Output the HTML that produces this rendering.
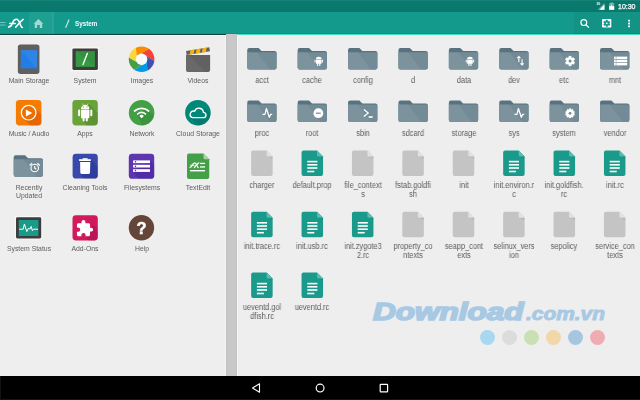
<!DOCTYPE html><html><head><meta charset="utf-8"><style>
*{margin:0;padding:0;box-sizing:border-box}
html,body{width:640px;height:400px;overflow:hidden;background:#eeeeee;font-family:"Liberation Sans",sans-serif}
body{position:relative}
.a{position:absolute}
.l{position:absolute;text-align:center;white-space:nowrap;color:#5c5c5c;font-size:6.85px;line-height:8px;width:56px}
.r{position:absolute;text-align:center;white-space:nowrap;color:#5c5c5c;font-size:8.5px;line-height:9px;width:50px;transform:scaleX(0.87);transform-origin:50% 0}
svg{position:absolute;left:0;top:0}
.l,.r{will-change:transform}
</style></head><body>

<div class="a" style="left:0;top:0;width:640px;height:12px;background:#08796c"></div>
<div class="a" style="left:0;top:0;width:640px;height:1px;background:#158378"></div>
<div class="a" style="left:0;top:12px;width:640px;height:22px;background:#149a8d"></div>
<div class="a" style="left:29px;top:12px;width:23px;height:22px;background:rgba(255,255,255,0.05)"></div>
<div class="a" style="left:52px;top:12px;width:2px;height:22px;background:rgba(255,255,255,0.09)"></div>
<div class="a" style="left:574px;top:12px;width:66px;height:22px;background:rgba(0,0,0,0.045)"></div>
<div class="a" style="left:0;top:34px;width:226px;height:1px;background:#0d4740"></div>
<div class="a" style="left:0;top:35px;width:226px;height:1px;background:#fafafa"></div>
<div class="a" style="left:0;top:33px;width:640px;height:1px;background:rgba(0,0,0,0.06)"></div>
<div class="a" style="left:237px;top:34px;width:403px;height:1px;background:#3fe3bd"></div>
<div class="a" style="left:237px;top:35px;width:403px;height:1px;background:#f8f0f1"></div>
<div class="a" style="left:225px;top:36px;width:1px;height:340px;background:#f6f6f6"></div>
<div class="a" style="left:226px;top:34px;width:11px;height:342px;background:#c8c8c8;border-left:1px solid #bfbfbf;border-right:1px solid #c2c2c2"></div>
<div class="a" style="left:237px;top:35px;width:1px;height:341px;background:#f6f6f6"></div>
<div class="a" style="left:0;top:376px;width:640px;height:24px;background:#000"></div>
<div class="a" style="left:0;top:399px;width:640px;height:1px;background:#141414"></div>
<div class="a" style="left:0;top:376px;width:1px;height:24px;background:#121212"></div>
<div class="a" style="left:74.8px;top:18.9px;font-size:6.3px;line-height:10px;font-weight:bold;color:#f4fbfa;will-change:transform">System</div>
<div class="a" style="left:618px;top:2.3px;font-size:7px;line-height:10px;font-weight:normal;color:#fff;will-change:transform;-webkit-text-stroke:0.25px #fff">10:30</div>
<div class="l" style="left:0.70px;top:76.98px">Main Storage</div>
<div class="l" style="left:57.20px;top:76.98px">System</div>
<div class="l" style="left:113.60px;top:76.98px">Images</div>
<div class="l" style="left:170.00px;top:76.98px">Videos</div>
<div class="l" style="left:0.70px;top:129.87px">Music / Audio</div>
<div class="l" style="left:57.20px;top:129.87px">Apps</div>
<div class="l" style="left:113.60px;top:129.87px">Network</div>
<div class="l" style="left:170.00px;top:129.87px">Cloud Storage</div>
<div class="l" style="left:0.70px;top:184.27px">Recently<br>Updated</div>
<div class="l" style="left:57.20px;top:184.02px">Cleaning Tools</div>
<div class="l" style="left:113.60px;top:184.02px">Filesystems</div>
<div class="l" style="left:170.00px;top:184.02px">TextEdit</div>
<div class="l" style="left:0.70px;top:244.87px">System Status</div>
<div class="l" style="left:57.20px;top:244.87px">Add-Ons</div>
<div class="l" style="left:113.60px;top:244.87px">Help</div>
<div class="r" style="left:236.90px;top:75.55px">acct</div>
<div class="r" style="left:287.30px;top:75.55px">cache</div>
<div class="r" style="left:337.70px;top:75.55px">config</div>
<div class="r" style="left:388.10px;top:75.55px">d</div>
<div class="r" style="left:438.50px;top:75.55px">data</div>
<div class="r" style="left:488.90px;top:75.55px">dev</div>
<div class="r" style="left:539.30px;top:75.55px">etc</div>
<div class="r" style="left:589.70px;top:75.55px">mnt</div>
<div class="r" style="left:236.90px;top:128.55px">proc</div>
<div class="r" style="left:287.30px;top:128.55px">root</div>
<div class="r" style="left:337.70px;top:128.55px">sbin</div>
<div class="r" style="left:388.10px;top:128.55px">sdcard</div>
<div class="r" style="left:438.50px;top:128.55px">storage</div>
<div class="r" style="left:488.90px;top:128.55px">sys</div>
<div class="r" style="left:539.30px;top:128.55px">system</div>
<div class="r" style="left:589.70px;top:128.55px">vendor</div>
<div class="r" style="left:236.90px;top:180.55px">charger</div>
<div class="r" style="left:287.30px;top:180.55px">default.prop</div>
<div class="r" style="left:337.70px;top:180.55px">file_context<br>s</div>
<div class="r" style="left:388.10px;top:180.55px">fstab.goldfi<br>sh</div>
<div class="r" style="left:438.50px;top:180.55px">init</div>
<div class="r" style="left:488.90px;top:180.55px">init.environ.r<br>c</div>
<div class="r" style="left:539.30px;top:180.55px">init.goldfish.<br>rc</div>
<div class="r" style="left:589.70px;top:180.55px">init.rc</div>
<div class="r" style="left:236.90px;top:241.55px">init.trace.rc</div>
<div class="r" style="left:287.30px;top:241.55px">init.usb.rc</div>
<div class="r" style="left:337.70px;top:241.55px">init.zygote3<br>2.rc</div>
<div class="r" style="left:388.10px;top:241.55px">property_co<br>ntexts</div>
<div class="r" style="left:438.50px;top:241.55px">seapp_cont<br>exts</div>
<div class="r" style="left:488.90px;top:241.55px">selinux_vers<br>ion</div>
<div class="r" style="left:539.30px;top:241.55px">sepolicy</div>
<div class="r" style="left:589.70px;top:241.55px">service_con<br>texts</div>
<div class="r" style="left:236.90px;top:302.55px">ueventd.gol<br>dfish.rc</div>
<div class="r" style="left:287.30px;top:302.55px">ueventd.rc</div>
<div class="a" style="left:372.8px;top:297.2px;font-size:23px;line-height:30px;font-weight:bold;font-style:italic;color:#a8c9e4;transform-origin:0 0;transform:scaleX(1.37);-webkit-text-stroke:1.6px #a8c9e4">Download</div>
<div class="a" style="left:526px;top:301.8px;font-size:18px;line-height:24px;font-weight:bold;font-style:italic;color:#a8c9e4;transform-origin:0 0;transform:scaleX(1.16);-webkit-text-stroke:0.9px #a8c9e4">.com.vn</div>
<div class="a" style="left:479.90px;top:329.9px;width:15.2px;height:15.2px;border-radius:50%;background:#a8d8ef"></div>
<div class="a" style="left:501.90px;top:329.9px;width:15.2px;height:15.2px;border-radius:50%;background:#dcdcdc"></div>
<div class="a" style="left:523.90px;top:329.9px;width:15.2px;height:15.2px;border-radius:50%;background:#c8e0b4"></div>
<div class="a" style="left:545.90px;top:329.9px;width:15.2px;height:15.2px;border-radius:50%;background:#f2d7a8"></div>
<div class="a" style="left:567.90px;top:329.9px;width:15.2px;height:15.2px;border-radius:50%;background:#a6c6e0"></div>
<div class="a" style="left:589.90px;top:329.9px;width:15.2px;height:15.2px;border-radius:50%;background:#efadb1"></div>
<svg width="640" height="400" viewBox="0 0 640 400"><g transform="translate(247.25,48.10)"><path d="M2,0 H11.36 L14.36,3 H27.30 a2,2 0 0 1 2,2 V19.50 a2,2 0 0 1 -2,2 H2 a2,2 0 0 1 -2,-2 V2 a2,2 0 0 1 2,-2 Z" fill="#58727f"/><path d="M0,4.1 H29.30 V19.50 a2,2 0 0 1 -2,2 H2 a2,2 0 0 1 -2,-2 Z" fill="#728b96"/><path d="M0,4.1 H9.67 L22.85,21.5 H2 a2,2 0 0 1 -2,-2 Z" fill="#fff" opacity="0.075"/></g><g transform="translate(297.65,48.10)"><path d="M2,0 H11.36 L14.36,3 H27.30 a2,2 0 0 1 2,2 V19.50 a2,2 0 0 1 -2,2 H2 a2,2 0 0 1 -2,-2 V2 a2,2 0 0 1 2,-2 Z" fill="#58727f"/><path d="M0,4.1 H29.30 V19.50 a2,2 0 0 1 -2,2 H2 a2,2 0 0 1 -2,-2 Z" fill="#728b96"/><path d="M0,4.1 H9.67 L22.85,21.5 H2 a2,2 0 0 1 -2,-2 Z" fill="#fff" opacity="0.075"/><g transform="translate(21.10,11.30)" fill="#fff"><path d="M-2.8,-0.35 a2.8,2.3 0 0 1 5.6,0 Z"/><rect x="-2.8" y="0" width="5.6" height="4.3" rx="0.5"/><rect x="-4.2" y="0" width="1.0" height="3.2" rx="0.5"/><rect x="3.2" y="0" width="1.0" height="3.2" rx="0.5"/><rect x="-1.6" y="3.6" width="1.15" height="3.0" rx="0.55"/><rect x="0.45" y="3.6" width="1.15" height="3.0" rx="0.55"/></g></g><g transform="translate(348.05,48.10)"><path d="M2,0 H11.36 L14.36,3 H27.30 a2,2 0 0 1 2,2 V19.50 a2,2 0 0 1 -2,2 H2 a2,2 0 0 1 -2,-2 V2 a2,2 0 0 1 2,-2 Z" fill="#58727f"/><path d="M0,4.1 H29.30 V19.50 a2,2 0 0 1 -2,2 H2 a2,2 0 0 1 -2,-2 Z" fill="#728b96"/><path d="M0,4.1 H9.67 L22.85,21.5 H2 a2,2 0 0 1 -2,-2 Z" fill="#fff" opacity="0.075"/></g><g transform="translate(398.45,48.10)"><path d="M2,0 H11.36 L14.36,3 H27.30 a2,2 0 0 1 2,2 V19.50 a2,2 0 0 1 -2,2 H2 a2,2 0 0 1 -2,-2 V2 a2,2 0 0 1 2,-2 Z" fill="#58727f"/><path d="M0,4.1 H29.30 V19.50 a2,2 0 0 1 -2,2 H2 a2,2 0 0 1 -2,-2 Z" fill="#728b96"/><path d="M0,4.1 H9.67 L22.85,21.5 H2 a2,2 0 0 1 -2,-2 Z" fill="#fff" opacity="0.075"/></g><g transform="translate(448.85,48.10)"><path d="M2,0 H11.36 L14.36,3 H27.30 a2,2 0 0 1 2,2 V19.50 a2,2 0 0 1 -2,2 H2 a2,2 0 0 1 -2,-2 V2 a2,2 0 0 1 2,-2 Z" fill="#58727f"/><path d="M0,4.1 H29.30 V19.50 a2,2 0 0 1 -2,2 H2 a2,2 0 0 1 -2,-2 Z" fill="#728b96"/><path d="M0,4.1 H9.67 L22.85,21.5 H2 a2,2 0 0 1 -2,-2 Z" fill="#fff" opacity="0.075"/><g transform="translate(21.10,11.30)" fill="#fff"><path d="M-2.8,-0.35 a2.8,2.3 0 0 1 5.6,0 Z"/><rect x="-2.8" y="0" width="5.6" height="4.3" rx="0.5"/><rect x="-4.2" y="0" width="1.0" height="3.2" rx="0.5"/><rect x="3.2" y="0" width="1.0" height="3.2" rx="0.5"/><rect x="-1.6" y="3.6" width="1.15" height="3.0" rx="0.55"/><rect x="0.45" y="3.6" width="1.15" height="3.0" rx="0.55"/></g></g><g transform="translate(499.25,48.10)"><path d="M2,0 H11.36 L14.36,3 H27.30 a2,2 0 0 1 2,2 V19.50 a2,2 0 0 1 -2,2 H2 a2,2 0 0 1 -2,-2 V2 a2,2 0 0 1 2,-2 Z" fill="#58727f"/><path d="M0,4.1 H29.30 V19.50 a2,2 0 0 1 -2,2 H2 a2,2 0 0 1 -2,-2 Z" fill="#728b96"/><path d="M0,4.1 H9.67 L22.85,21.5 H2 a2,2 0 0 1 -2,-2 Z" fill="#fff" opacity="0.075"/><g transform="translate(21.20,12.60)" stroke="#fff" stroke-width="1.1" fill="none"><path d="M-1.6,1.5 V-4.2 M-3.2,-2.6 L-1.6,-4.2 L0,-2.6"/><path d="M1.6,-1.5 V4.2 M0,2.6 L1.6,4.2 L3.2,2.6"/></g></g><g transform="translate(549.65,48.10)"><path d="M2,0 H11.36 L14.36,3 H27.30 a2,2 0 0 1 2,2 V19.50 a2,2 0 0 1 -2,2 H2 a2,2 0 0 1 -2,-2 V2 a2,2 0 0 1 2,-2 Z" fill="#58727f"/><path d="M0,4.1 H29.30 V19.50 a2,2 0 0 1 -2,2 H2 a2,2 0 0 1 -2,-2 Z" fill="#728b96"/><path d="M0,4.1 H9.67 L22.85,21.5 H2 a2,2 0 0 1 -2,-2 Z" fill="#fff" opacity="0.075"/><path d="M20.40,8.00 L21.04,8.04 L21.67,8.17 L21.79,9.55 L22.21,9.76 L22.61,10.02 L23.86,9.44 L24.29,9.92 L24.64,10.45 L24.93,11.02 L25.13,11.63 L23.99,12.43 L24.03,12.90 L23.99,13.37 L25.13,14.17 L24.93,14.78 L24.64,15.35 L24.29,15.88 L23.86,16.36 L22.61,15.78 L22.21,16.04 L21.79,16.25 L21.67,17.63 L21.04,17.76 L20.40,17.80 L19.76,17.76 L19.13,17.63 L19.01,16.25 L18.59,16.04 L18.19,15.78 L16.94,16.36 L16.51,15.88 L16.16,15.35 L15.87,14.78 L15.67,14.17 L16.81,13.37 L16.77,12.90 L16.81,12.43 L15.67,11.63 L15.87,11.02 L16.16,10.45 L16.51,9.92 L16.94,9.44 L18.19,10.02 L18.59,9.76 L19.01,9.55 L19.13,8.17 L19.76,8.04Z" fill="#fff" stroke="#fff" stroke-width="0.3" stroke-linejoin="round"/><circle cx="20.40" cy="12.90" r="1.5" fill="#728b96"/></g><g transform="translate(600.05,48.10)"><path d="M2,0 H11.36 L14.36,3 H27.30 a2,2 0 0 1 2,2 V19.50 a2,2 0 0 1 -2,2 H2 a2,2 0 0 1 -2,-2 V2 a2,2 0 0 1 2,-2 Z" fill="#58727f"/><path d="M0,4.1 H29.30 V19.50 a2,2 0 0 1 -2,2 H2 a2,2 0 0 1 -2,-2 Z" fill="#728b96"/><path d="M0,4.1 H9.67 L22.85,21.5 H2 a2,2 0 0 1 -2,-2 Z" fill="#fff" opacity="0.075"/><rect x="14.00" y="8.50" width="13.2" height="2.5" fill="#fff"/><rect x="16.10" y="8.50" width="0.6" height="2.5" fill="#728b96" opacity="0.5"/><rect x="14.80" y="9.30" width="0.9" height="0.9" fill="#728b96" opacity="0.6"/><rect x="14.00" y="11.65" width="13.2" height="2.5" fill="#fff"/><rect x="16.10" y="11.65" width="0.6" height="2.5" fill="#728b96" opacity="0.5"/><rect x="14.80" y="12.45" width="0.9" height="0.9" fill="#728b96" opacity="0.6"/><rect x="14.00" y="14.80" width="13.2" height="2.5" fill="#fff"/><rect x="16.10" y="14.80" width="0.6" height="2.5" fill="#728b96" opacity="0.5"/><rect x="14.80" y="15.60" width="0.9" height="0.9" fill="#728b96" opacity="0.6"/></g><g transform="translate(247.25,100.40)"><path d="M2,0 H11.36 L14.36,3 H27.30 a2,2 0 0 1 2,2 V19.50 a2,2 0 0 1 -2,2 H2 a2,2 0 0 1 -2,-2 V2 a2,2 0 0 1 2,-2 Z" fill="#58727f"/><path d="M0,4.1 H29.30 V19.50 a2,2 0 0 1 -2,2 H2 a2,2 0 0 1 -2,-2 Z" fill="#728b96"/><path d="M0,4.1 H9.67 L22.85,21.5 H2 a2,2 0 0 1 -2,-2 Z" fill="#fff" opacity="0.075"/><path d="M15.25,13.90 H17.75 L19.15,8.10 L22.05,16.90 L23.55,13.90 H24.95" fill="none" stroke="#fff" stroke-width="1.25" stroke-linejoin="round"/></g><g transform="translate(297.65,100.40)"><path d="M2,0 H11.36 L14.36,3 H27.30 a2,2 0 0 1 2,2 V19.50 a2,2 0 0 1 -2,2 H2 a2,2 0 0 1 -2,-2 V2 a2,2 0 0 1 2,-2 Z" fill="#58727f"/><path d="M0,4.1 H29.30 V19.50 a2,2 0 0 1 -2,2 H2 a2,2 0 0 1 -2,-2 Z" fill="#728b96"/><path d="M0,4.1 H9.67 L22.85,21.5 H2 a2,2 0 0 1 -2,-2 Z" fill="#fff" opacity="0.075"/><circle cx="20.70" cy="12.80" r="4.9" fill="#fff"/><rect x="18.30" y="12.20" width="4.8" height="1.2" fill="#728b96"/></g><g transform="translate(348.05,100.40)"><path d="M2,0 H11.36 L14.36,3 H27.30 a2,2 0 0 1 2,2 V19.50 a2,2 0 0 1 -2,2 H2 a2,2 0 0 1 -2,-2 V2 a2,2 0 0 1 2,-2 Z" fill="#58727f"/><path d="M0,4.1 H29.30 V19.50 a2,2 0 0 1 -2,2 H2 a2,2 0 0 1 -2,-2 Z" fill="#728b96"/><path d="M0,4.1 H9.67 L22.85,21.5 H2 a2,2 0 0 1 -2,-2 Z" fill="#fff" opacity="0.075"/><path d="M15.85,9.20 l4.3,3.5 l-4.3,3.4" fill="none" stroke="#fff" stroke-width="1.3"/><rect x="20.55" y="15.80" width="4.1" height="1.6" fill="#fff"/></g><g transform="translate(398.45,100.40)"><path d="M2,0 H11.36 L14.36,3 H27.30 a2,2 0 0 1 2,2 V19.50 a2,2 0 0 1 -2,2 H2 a2,2 0 0 1 -2,-2 V2 a2,2 0 0 1 2,-2 Z" fill="#58727f"/><path d="M0,4.1 H29.30 V19.50 a2,2 0 0 1 -2,2 H2 a2,2 0 0 1 -2,-2 Z" fill="#728b96"/><path d="M0,4.1 H9.67 L22.85,21.5 H2 a2,2 0 0 1 -2,-2 Z" fill="#fff" opacity="0.075"/></g><g transform="translate(448.85,100.40)"><path d="M2,0 H11.36 L14.36,3 H27.30 a2,2 0 0 1 2,2 V19.50 a2,2 0 0 1 -2,2 H2 a2,2 0 0 1 -2,-2 V2 a2,2 0 0 1 2,-2 Z" fill="#58727f"/><path d="M0,4.1 H29.30 V19.50 a2,2 0 0 1 -2,2 H2 a2,2 0 0 1 -2,-2 Z" fill="#728b96"/><path d="M0,4.1 H9.67 L22.85,21.5 H2 a2,2 0 0 1 -2,-2 Z" fill="#fff" opacity="0.075"/></g><g transform="translate(499.25,100.40)"><path d="M2,0 H11.36 L14.36,3 H27.30 a2,2 0 0 1 2,2 V19.50 a2,2 0 0 1 -2,2 H2 a2,2 0 0 1 -2,-2 V2 a2,2 0 0 1 2,-2 Z" fill="#58727f"/><path d="M0,4.1 H29.30 V19.50 a2,2 0 0 1 -2,2 H2 a2,2 0 0 1 -2,-2 Z" fill="#728b96"/><path d="M0,4.1 H9.67 L22.85,21.5 H2 a2,2 0 0 1 -2,-2 Z" fill="#fff" opacity="0.075"/><path d="M15.25,13.90 H17.75 L19.15,8.10 L22.05,16.90 L23.55,13.90 H24.95" fill="none" stroke="#fff" stroke-width="1.25" stroke-linejoin="round"/></g><g transform="translate(549.65,100.40)"><path d="M2,0 H11.36 L14.36,3 H27.30 a2,2 0 0 1 2,2 V19.50 a2,2 0 0 1 -2,2 H2 a2,2 0 0 1 -2,-2 V2 a2,2 0 0 1 2,-2 Z" fill="#58727f"/><path d="M0,4.1 H29.30 V19.50 a2,2 0 0 1 -2,2 H2 a2,2 0 0 1 -2,-2 Z" fill="#728b96"/><path d="M0,4.1 H9.67 L22.85,21.5 H2 a2,2 0 0 1 -2,-2 Z" fill="#fff" opacity="0.075"/><path d="M20.40,8.20 L20.77,8.21 L21.14,8.26 L21.32,9.06 L21.62,9.15 L21.91,9.25 L22.53,8.71 L22.86,8.89 L23.16,9.10 L23.45,9.33 L23.72,9.58 L23.40,10.34 L23.59,10.58 L23.77,10.84 L24.59,10.77 L24.74,11.10 L24.87,11.45 L24.97,11.80 L25.04,12.16 L24.34,12.59 L24.35,12.90 L24.34,13.21 L25.04,13.64 L24.97,14.00 L24.87,14.35 L24.74,14.70 L24.59,15.03 L23.77,14.96 L23.59,15.22 L23.40,15.46 L23.72,16.22 L23.45,16.47 L23.16,16.70 L22.86,16.91 L22.53,17.09 L21.91,16.55 L21.62,16.65 L21.32,16.74 L21.14,17.54 L20.77,17.59 L20.40,17.60 L20.03,17.59 L19.66,17.54 L19.48,16.74 L19.18,16.65 L18.89,16.55 L18.27,17.09 L17.94,16.91 L17.64,16.70 L17.35,16.47 L17.08,16.22 L17.40,15.46 L17.21,15.22 L17.03,14.96 L16.21,15.03 L16.06,14.70 L15.93,14.35 L15.83,14.00 L15.76,13.64 L16.46,13.21 L16.45,12.90 L16.46,12.59 L15.76,12.16 L15.83,11.80 L15.93,11.45 L16.06,11.10 L16.21,10.77 L17.03,10.84 L17.21,10.58 L17.40,10.34 L17.08,9.58 L17.35,9.33 L17.64,9.10 L17.94,8.89 L18.27,8.71 L18.89,9.25 L19.18,9.15 L19.48,9.06 L19.66,8.26 L20.03,8.21Z" fill="#fff" stroke="#fff" stroke-width="0.3" stroke-linejoin="round"/><circle cx="20.40" cy="12.90" r="1.4" fill="#728b96"/></g><g transform="translate(600.05,100.40)"><path d="M2,0 H11.36 L14.36,3 H27.30 a2,2 0 0 1 2,2 V19.50 a2,2 0 0 1 -2,2 H2 a2,2 0 0 1 -2,-2 V2 a2,2 0 0 1 2,-2 Z" fill="#58727f"/><path d="M0,4.1 H29.30 V19.50 a2,2 0 0 1 -2,2 H2 a2,2 0 0 1 -2,-2 Z" fill="#728b96"/><path d="M0,4.1 H9.67 L22.85,21.5 H2 a2,2 0 0 1 -2,-2 Z" fill="#fff" opacity="0.075"/></g><g transform="translate(251.15,150.60)"><path d="M2,0 H15.50 L21.50,6 V23.50 a2,2 0 0 1 -2,2 H2 a2,2 0 0 1 -2,-2 V2 a2,2 0 0 1 2,-2 Z" fill="#c4c4c4"/><path d="M15.50,0 L21.50,6 V8.50 L16.50,6 Z" fill="#000" opacity="0.07"/><path d="M15.50,0 L21.50,6 H17.00 a1.5,1.5 0 0 1 -1.5,-1.5 Z" fill="#e2e2e2"/></g><g transform="translate(301.55,150.60)"><path d="M2,0 H15.50 L21.50,6 V23.50 a2,2 0 0 1 -2,2 H2 a2,2 0 0 1 -2,-2 V2 a2,2 0 0 1 2,-2 Z" fill="#1a9a8a"/><path d="M15.50,0 L21.50,6 V8.50 L16.50,6 Z" fill="#000" opacity="0.07"/><path d="M15.50,0 L21.50,6 H17.00 a1.5,1.5 0 0 1 -1.5,-1.5 Z" fill="#5cbcb0"/><rect x="5.75" y="10.20" width="10.1" height="1.6" fill="#fff"/><rect x="5.75" y="13.40" width="10.1" height="1.6" fill="#fff"/><rect x="5.75" y="16.60" width="10.1" height="1.6" fill="#fff"/><rect x="5.75" y="20.10" width="7.0" height="1.6" fill="#fff"/></g><g transform="translate(351.95,150.60)"><path d="M2,0 H15.50 L21.50,6 V23.50 a2,2 0 0 1 -2,2 H2 a2,2 0 0 1 -2,-2 V2 a2,2 0 0 1 2,-2 Z" fill="#c4c4c4"/><path d="M15.50,0 L21.50,6 V8.50 L16.50,6 Z" fill="#000" opacity="0.07"/><path d="M15.50,0 L21.50,6 H17.00 a1.5,1.5 0 0 1 -1.5,-1.5 Z" fill="#e2e2e2"/></g><g transform="translate(402.35,150.60)"><path d="M2,0 H15.50 L21.50,6 V23.50 a2,2 0 0 1 -2,2 H2 a2,2 0 0 1 -2,-2 V2 a2,2 0 0 1 2,-2 Z" fill="#c4c4c4"/><path d="M15.50,0 L21.50,6 V8.50 L16.50,6 Z" fill="#000" opacity="0.07"/><path d="M15.50,0 L21.50,6 H17.00 a1.5,1.5 0 0 1 -1.5,-1.5 Z" fill="#e2e2e2"/></g><g transform="translate(452.75,150.60)"><path d="M2,0 H15.50 L21.50,6 V23.50 a2,2 0 0 1 -2,2 H2 a2,2 0 0 1 -2,-2 V2 a2,2 0 0 1 2,-2 Z" fill="#c4c4c4"/><path d="M15.50,0 L21.50,6 V8.50 L16.50,6 Z" fill="#000" opacity="0.07"/><path d="M15.50,0 L21.50,6 H17.00 a1.5,1.5 0 0 1 -1.5,-1.5 Z" fill="#e2e2e2"/></g><g transform="translate(503.15,150.60)"><path d="M2,0 H15.50 L21.50,6 V23.50 a2,2 0 0 1 -2,2 H2 a2,2 0 0 1 -2,-2 V2 a2,2 0 0 1 2,-2 Z" fill="#1a9a8a"/><path d="M15.50,0 L21.50,6 V8.50 L16.50,6 Z" fill="#000" opacity="0.07"/><path d="M15.50,0 L21.50,6 H17.00 a1.5,1.5 0 0 1 -1.5,-1.5 Z" fill="#5cbcb0"/><rect x="5.75" y="10.20" width="10.1" height="1.6" fill="#fff"/><rect x="5.75" y="13.40" width="10.1" height="1.6" fill="#fff"/><rect x="5.75" y="16.60" width="10.1" height="1.6" fill="#fff"/><rect x="5.75" y="20.10" width="7.0" height="1.6" fill="#fff"/></g><g transform="translate(553.55,150.60)"><path d="M2,0 H15.50 L21.50,6 V23.50 a2,2 0 0 1 -2,2 H2 a2,2 0 0 1 -2,-2 V2 a2,2 0 0 1 2,-2 Z" fill="#1a9a8a"/><path d="M15.50,0 L21.50,6 V8.50 L16.50,6 Z" fill="#000" opacity="0.07"/><path d="M15.50,0 L21.50,6 H17.00 a1.5,1.5 0 0 1 -1.5,-1.5 Z" fill="#5cbcb0"/><rect x="5.75" y="10.20" width="10.1" height="1.6" fill="#fff"/><rect x="5.75" y="13.40" width="10.1" height="1.6" fill="#fff"/><rect x="5.75" y="16.60" width="10.1" height="1.6" fill="#fff"/><rect x="5.75" y="20.10" width="7.0" height="1.6" fill="#fff"/></g><g transform="translate(603.95,150.60)"><path d="M2,0 H15.50 L21.50,6 V23.50 a2,2 0 0 1 -2,2 H2 a2,2 0 0 1 -2,-2 V2 a2,2 0 0 1 2,-2 Z" fill="#1a9a8a"/><path d="M15.50,0 L21.50,6 V8.50 L16.50,6 Z" fill="#000" opacity="0.07"/><path d="M15.50,0 L21.50,6 H17.00 a1.5,1.5 0 0 1 -1.5,-1.5 Z" fill="#5cbcb0"/><rect x="5.75" y="10.20" width="10.1" height="1.6" fill="#fff"/><rect x="5.75" y="13.40" width="10.1" height="1.6" fill="#fff"/><rect x="5.75" y="16.60" width="10.1" height="1.6" fill="#fff"/><rect x="5.75" y="20.10" width="7.0" height="1.6" fill="#fff"/></g><g transform="translate(251.15,211.80)"><path d="M2,0 H15.50 L21.50,6 V23.50 a2,2 0 0 1 -2,2 H2 a2,2 0 0 1 -2,-2 V2 a2,2 0 0 1 2,-2 Z" fill="#1a9a8a"/><path d="M15.50,0 L21.50,6 V8.50 L16.50,6 Z" fill="#000" opacity="0.07"/><path d="M15.50,0 L21.50,6 H17.00 a1.5,1.5 0 0 1 -1.5,-1.5 Z" fill="#5cbcb0"/><rect x="5.75" y="10.20" width="10.1" height="1.6" fill="#fff"/><rect x="5.75" y="13.40" width="10.1" height="1.6" fill="#fff"/><rect x="5.75" y="16.60" width="10.1" height="1.6" fill="#fff"/><rect x="5.75" y="20.10" width="7.0" height="1.6" fill="#fff"/></g><g transform="translate(301.55,211.80)"><path d="M2,0 H15.50 L21.50,6 V23.50 a2,2 0 0 1 -2,2 H2 a2,2 0 0 1 -2,-2 V2 a2,2 0 0 1 2,-2 Z" fill="#1a9a8a"/><path d="M15.50,0 L21.50,6 V8.50 L16.50,6 Z" fill="#000" opacity="0.07"/><path d="M15.50,0 L21.50,6 H17.00 a1.5,1.5 0 0 1 -1.5,-1.5 Z" fill="#5cbcb0"/><rect x="5.75" y="10.20" width="10.1" height="1.6" fill="#fff"/><rect x="5.75" y="13.40" width="10.1" height="1.6" fill="#fff"/><rect x="5.75" y="16.60" width="10.1" height="1.6" fill="#fff"/><rect x="5.75" y="20.10" width="7.0" height="1.6" fill="#fff"/></g><g transform="translate(351.95,211.80)"><path d="M2,0 H15.50 L21.50,6 V23.50 a2,2 0 0 1 -2,2 H2 a2,2 0 0 1 -2,-2 V2 a2,2 0 0 1 2,-2 Z" fill="#1a9a8a"/><path d="M15.50,0 L21.50,6 V8.50 L16.50,6 Z" fill="#000" opacity="0.07"/><path d="M15.50,0 L21.50,6 H17.00 a1.5,1.5 0 0 1 -1.5,-1.5 Z" fill="#5cbcb0"/><rect x="5.75" y="10.20" width="10.1" height="1.6" fill="#fff"/><rect x="5.75" y="13.40" width="10.1" height="1.6" fill="#fff"/><rect x="5.75" y="16.60" width="10.1" height="1.6" fill="#fff"/><rect x="5.75" y="20.10" width="7.0" height="1.6" fill="#fff"/></g><g transform="translate(402.35,211.80)"><path d="M2,0 H15.50 L21.50,6 V23.50 a2,2 0 0 1 -2,2 H2 a2,2 0 0 1 -2,-2 V2 a2,2 0 0 1 2,-2 Z" fill="#c4c4c4"/><path d="M15.50,0 L21.50,6 V8.50 L16.50,6 Z" fill="#000" opacity="0.07"/><path d="M15.50,0 L21.50,6 H17.00 a1.5,1.5 0 0 1 -1.5,-1.5 Z" fill="#e2e2e2"/></g><g transform="translate(452.75,211.80)"><path d="M2,0 H15.50 L21.50,6 V23.50 a2,2 0 0 1 -2,2 H2 a2,2 0 0 1 -2,-2 V2 a2,2 0 0 1 2,-2 Z" fill="#c4c4c4"/><path d="M15.50,0 L21.50,6 V8.50 L16.50,6 Z" fill="#000" opacity="0.07"/><path d="M15.50,0 L21.50,6 H17.00 a1.5,1.5 0 0 1 -1.5,-1.5 Z" fill="#e2e2e2"/></g><g transform="translate(503.15,211.80)"><path d="M2,0 H15.50 L21.50,6 V23.50 a2,2 0 0 1 -2,2 H2 a2,2 0 0 1 -2,-2 V2 a2,2 0 0 1 2,-2 Z" fill="#c4c4c4"/><path d="M15.50,0 L21.50,6 V8.50 L16.50,6 Z" fill="#000" opacity="0.07"/><path d="M15.50,0 L21.50,6 H17.00 a1.5,1.5 0 0 1 -1.5,-1.5 Z" fill="#e2e2e2"/></g><g transform="translate(553.55,211.80)"><path d="M2,0 H15.50 L21.50,6 V23.50 a2,2 0 0 1 -2,2 H2 a2,2 0 0 1 -2,-2 V2 a2,2 0 0 1 2,-2 Z" fill="#c4c4c4"/><path d="M15.50,0 L21.50,6 V8.50 L16.50,6 Z" fill="#000" opacity="0.07"/><path d="M15.50,0 L21.50,6 H17.00 a1.5,1.5 0 0 1 -1.5,-1.5 Z" fill="#e2e2e2"/></g><g transform="translate(603.95,211.80)"><path d="M2,0 H15.50 L21.50,6 V23.50 a2,2 0 0 1 -2,2 H2 a2,2 0 0 1 -2,-2 V2 a2,2 0 0 1 2,-2 Z" fill="#c4c4c4"/><path d="M15.50,0 L21.50,6 V8.50 L16.50,6 Z" fill="#000" opacity="0.07"/><path d="M15.50,0 L21.50,6 H17.00 a1.5,1.5 0 0 1 -1.5,-1.5 Z" fill="#e2e2e2"/></g><g transform="translate(251.15,272.60)"><path d="M2,0 H15.50 L21.50,6 V23.50 a2,2 0 0 1 -2,2 H2 a2,2 0 0 1 -2,-2 V2 a2,2 0 0 1 2,-2 Z" fill="#1a9a8a"/><path d="M15.50,0 L21.50,6 V8.50 L16.50,6 Z" fill="#000" opacity="0.07"/><path d="M15.50,0 L21.50,6 H17.00 a1.5,1.5 0 0 1 -1.5,-1.5 Z" fill="#5cbcb0"/><rect x="5.75" y="10.20" width="10.1" height="1.6" fill="#fff"/><rect x="5.75" y="13.40" width="10.1" height="1.6" fill="#fff"/><rect x="5.75" y="16.60" width="10.1" height="1.6" fill="#fff"/><rect x="5.75" y="20.10" width="7.0" height="1.6" fill="#fff"/></g><g transform="translate(301.55,272.60)"><path d="M2,0 H15.50 L21.50,6 V23.50 a2,2 0 0 1 -2,2 H2 a2,2 0 0 1 -2,-2 V2 a2,2 0 0 1 2,-2 Z" fill="#1a9a8a"/><path d="M15.50,0 L21.50,6 V8.50 L16.50,6 Z" fill="#000" opacity="0.07"/><path d="M15.50,0 L21.50,6 H17.00 a1.5,1.5 0 0 1 -1.5,-1.5 Z" fill="#5cbcb0"/><rect x="5.75" y="10.20" width="10.1" height="1.6" fill="#fff"/><rect x="5.75" y="13.40" width="10.1" height="1.6" fill="#fff"/><rect x="5.75" y="16.60" width="10.1" height="1.6" fill="#fff"/><rect x="5.75" y="20.10" width="7.0" height="1.6" fill="#fff"/></g><rect x="17.85" y="44.5" width="21.6" height="29.4" rx="2.6" fill="#5f5f5f"/><rect x="20.8" y="50.1" width="16.2" height="18.3" fill="#237de6"/><path d="M20.8,50.1 H37 V68.4 Z" fill="#fff" opacity="0.06"/><rect x="71.25" y="46.75" width="27.5" height="24.35" fill="#f7f7f7"/><rect x="72.4" y="48.5" width="25.5" height="21.4" rx="1.3" fill="#3d3d3d"/><rect x="75.7" y="51.1" width="19.2" height="15.8" fill="#379a42"/><path d="M75.7,51.1 H94.9 V66.9 Z" fill="#000" opacity="0.05"/><line x1="87.3" y1="53.5" x2="83" y2="64.6" stroke="#fff" stroke-width="1.35" stroke-linecap="round"/><clipPath id="apc"><circle cx="141.6" cy="59.2" r="12.8"/></clipPath><g clip-path="url(#apc)"><path d="M136.48,56.35 L141.20,53.50 L175.46,32.84 L133.69,16.45 Z" fill="#fb8c00"/><path d="M141.20,53.50 L146.33,56.35 L181.28,75.80 L175.46,32.84 Z" fill="#f44336"/><path d="M146.33,56.35 L146.72,62.05 L149.51,101.95 L181.28,75.80 Z" fill="#3f51b5"/><path d="M146.72,62.05 L142.00,64.90 L107.74,85.56 L149.51,101.95 Z" fill="#039be5"/><path d="M142.00,64.90 L136.87,62.05 L101.92,42.60 L107.74,85.56 Z" fill="#43a047"/><path d="M136.87,62.05 L136.48,56.35 L133.69,16.45 L101.92,42.60 Z" fill="#fdd835"/></g><circle cx="141.6" cy="59.2" r="5.7" fill="#fafafa"/><path d="M186,54.9 H210.1 V70 a2,2 0 0 1 -2,2 H188 a2,2 0 0 1 -2,-2 Z" fill="#616161"/><path d="M186,54.9 H189 L205.5,72 H188 a2,2 0 0 1 -2,-2 Z" fill="#fff" opacity="0.05"/><g transform="translate(186.0,50.9) rotate(-9)"><rect x="0" y="0" width="23.6" height="4.1" fill="#616161"/><path d="M4.60,0 h4.0 l-1.6,4.1 h-4.0 Z" fill="#ffb300"/><path d="M10.80,0 h4.0 l-1.6,4.1 h-4.0 Z" fill="#ffb300"/><path d="M17.00,0 h4.0 l-1.6,4.1 h-4.0 Z" fill="#ffb300"/></g><rect x="15.9" y="99.9" width="25.5" height="25.5" rx="3.4" fill="#f57c00"/><clipPath id="muc"><rect x="15.9" y="99.9" width="25.5" height="25.5" rx="3.4"/></clipPath><path d="M23.3,118.3 L34.2,107.4 L52,125 L41,136 Z" fill="#bf360c" opacity="0.3" clip-path="url(#muc)"/><circle cx="28.65" cy="112.7" r="7.3" fill="#ec7000" stroke="#fff" stroke-width="1.2"/><path d="M25.9,109.4 L32.25,112.9 L25.9,116.5 Z" fill="#fff"/><rect x="72.4" y="100" width="25.4" height="25.5" rx="3.4" fill="#6aa33a"/><clipPath id="apc2"><rect x="72.4" y="100" width="25.4" height="25.5" rx="3.4"/></clipPath><path d="M81,110 L89.4,104.4 L110,125 L95,140 L84,121.5 Z" fill="#33691e" opacity="0.25" clip-path="url(#apc2)"/><g fill="#fff"><path d="M81,108.9 a4.2,4.2 0 0 1 8.4,0 Z"/><rect x="81" y="109.6" width="8.4" height="8.6" rx="0.8"/><rect x="78.1" y="109.6" width="2" height="6.6" rx="1"/><rect x="90.3" y="109.6" width="2" height="6.6" rx="1"/><rect x="82.6" y="116.5" width="2" height="5" rx="1"/><rect x="85.8" y="116.5" width="2" height="5" rx="1"/><path d="M82.2,103.5 l1.2,1.6 M88.2,103.5 l-1.2,1.6" stroke="#fff" stroke-width="0.5"/></g><circle cx="83.3" cy="106.9" r="0.55" fill="#6aa33a"/><circle cx="87.1" cy="106.9" r="0.55" fill="#6aa33a"/><circle cx="141.6" cy="112.7" r="12.8" fill="#43a047"/><clipPath id="nwc"><circle cx="141.6" cy="112.7" r="12.8"/></clipPath><path d="M136,113 L147,109 L165,127 L150,140 Z" fill="#1b5e20" opacity="0.2" clip-path="url(#nwc)"/><g fill="none" stroke="#fff" stroke-width="1.7" stroke-linecap="round"><path d="M134.6,111 A10.4,10.4 0 0 1 148.6,111"/><path d="M137.7,114 A5.6,5.6 0 0 1 145.5,114"/></g><path d="M139.3,115.9 A3.4,3.4 0 0 1 143.9,115.9 L141.6,118.2 Z" fill="#fff"/><circle cx="197.9" cy="112.7" r="12.8" fill="#00897b"/><clipPath id="clc"><circle cx="197.9" cy="112.7" r="12.8"/></clipPath><path d="M190,117 L205,108 L225,128 L210,140 Z" fill="#004d40" opacity="0.2" clip-path="url(#clc)"/><path d="M192.5,117.6 H203.3 a2.6,2.6 0 0 0 0.2,-5.2 a4.6,4.6 0 0 0 -8.9,-1.2 a3.2,3.2 0 0 0 -2.1,6.4 Z" fill="#00897b" stroke="#fff" stroke-width="1.35"/><g transform="translate(13.70,155.20)"><path d="M2,0 H11.36 L14.36,3 H27.30 a2,2 0 0 1 2,2 V19.50 a2,2 0 0 1 -2,2 H2 a2,2 0 0 1 -2,-2 V2 a2,2 0 0 1 2,-2 Z" fill="#58727f"/><path d="M0,4.1 H29.30 V19.50 a2,2 0 0 1 -2,2 H2 a2,2 0 0 1 -2,-2 Z" fill="#728b96"/><path d="M0,4.1 H9.67 L22.85,21.5 H2 a2,2 0 0 1 -2,-2 Z" fill="#fff" opacity="0.075"/><g fill="none" stroke="#fff" stroke-width="1.15"><circle cx="21.00" cy="12.80" r="3.75"/><path d="M21.00,10.70 V12.80 L22.50,14.10"/></g><path d="M15.90,10.20 L18.30,8.10 M26.10,10.20 L23.70,8.10" stroke="#fff" stroke-width="1.3"/></g><rect x="72.6" y="153.8" width="25.2" height="24.8" rx="3.4" fill="#3949ab"/><clipPath id="ctc"><rect x="72.6" y="153.8" width="25.2" height="24.8" rx="3.4"/></clipPath><path d="M80,161 L90.4,159 L110,179 L95,195 L80,173 Z" fill="#1a237e" opacity="0.3" clip-path="url(#ctc)"/><rect x="79.1" y="159.2" width="11.7" height="1.8" fill="#fff"/><rect x="82.7" y="158.2" width="4.9" height="1.4" fill="#fff"/><path d="M80.1,162.1 H90.3 L90,172.6 a1.3,1.3 0 0 1 -1.3,1.3 H81.6 a1.3,1.3 0 0 1 -1.3,-1.3 Z" fill="#fff"/><rect x="128.8" y="153.8" width="25.4" height="25" rx="3.4" fill="#5e35b1"/><clipPath id="fsc"><rect x="128.8" y="153.8" width="25.4" height="25" rx="3.4"/></clipPath><path d="M133.1,171.5 L150,160.6 L170,180 L150,195 Z" fill="#311b92" opacity="0.3" clip-path="url(#fsc)"/><rect x="133.1" y="160.4" width="16.9" height="2.7" fill="#fff"/><circle cx="135.5" cy="161.75" r="0.75" fill="#4527a0"/><rect x="133.1" y="164.8" width="16.9" height="2.7" fill="#fff"/><circle cx="135.5" cy="166.15" r="0.75" fill="#4527a0"/><rect x="133.1" y="169.2" width="16.9" height="2.7" fill="#fff"/><circle cx="135.5" cy="170.55" r="0.75" fill="#4527a0"/><path d="M189,153.5 H203.5 L209.25,159.2 V177 a2,2 0 0 1 -2,2 H189 a2,2 0 0 1 -2,-2 V155.5 a2,2 0 0 1 2,-2 Z" fill="#43a047"/><path d="M203.5,153.5 L209.25,159.2 H205 a1.5,1.5 0 0 1 -1.5,-1.5 Z" fill="#a5d6a7"/><g transform="translate(184.9,151.2) scale(0.6)" fill="none" stroke="#fff" stroke-width="2" stroke-linecap="round"><path d="M8.6,27.1 C10.6,27 11.6,25.4 12.5,23 C13.4,20.6 14.4,19.3 16.5,19.3 C18.5,19.3 19.4,22 20.1,24 C20.8,26 21.5,27.4 22.4,27.4"/><path d="M9.7,23.4 H15.3"/><path d="M23.1,19.4 C20.6,21.4 18,24.4 15.7,27.3"/></g><rect x="200" y="162.8" width="5" height="1.3" fill="#fff"/><rect x="200" y="166.3" width="5" height="1.3" fill="#fff"/><rect x="190" y="170" width="15" height="1.4" fill="#fff"/><rect x="14.9" y="216.1" width="27.4" height="23.4" rx="1.5" fill="#f7f7f7"/><rect x="16" y="217.2" width="25.2" height="21.2" rx="1.3" fill="#3d3d3d"/><rect x="18.8" y="220" width="19.6" height="16" fill="#1a9a89"/><path d="M19.2,229.2 H23.2 L24.4,224 L26.8,231.6 L28.4,228.4 L30,229 L31.2,226.4 L32.4,230.8 L33.4,229.2 H38" fill="none" stroke="#fff" stroke-width="1" stroke-linejoin="round"/><rect x="72.5" y="215.3" width="25.3" height="25.2" rx="3.4" fill="#d01a5c"/><clipPath id="adc"><rect x="72.5" y="215.3" width="25.3" height="25.2" rx="3.4"/></clipPath><path d="M85,234 L93,225 L110,240 L95,255 Z" fill="#880e4f" opacity="0.3" clip-path="url(#adc)"/><g transform="translate(75.4,219.3) scale(0.77)"><path d="M20.5 11H19V7c0-1.1-.9-2-2-2h-4V3.5C13 2.12 11.88 1 10.5 1S8 2.12 8 3.5V5H4c-1.1 0-1.99.9-1.99 2v3.8H3.5c1.49 0 2.7 1.21 2.7 2.7s-1.21 2.7-2.7 2.7H2V20c0 1.1.9 2 2 2h3.8v-1.5c0-1.49 1.210-2.7 2.7-2.7 1.49 0 2.7 1.21 2.7 2.7V22H17c1.1 0 2-.9 2-2v-4h1.5c1.38 0 2.5-1.12 2.5-2.5S21.88 11 20.5 11z" fill="#fff"/></g><circle cx="141.45" cy="227.8" r="12.7" fill="#664539"/><text x="141.5" y="234.4" text-anchor="middle" font-family="Liberation Sans" font-weight="bold" font-size="16.5" fill="#fff" stroke="#fff" stroke-width="0.5">?</text><rect x="0" y="22" width="5.6" height="0.9" fill="#fff" opacity="0.45"/><rect x="0" y="24.6" width="5.6" height="0.9" fill="#fff" opacity="0.45"/><g fill="none" stroke="#fff" stroke-width="1.55" stroke-linecap="round"><path d="M8.6,27.1 C10.6,27 11.6,25.4 12.5,23 C13.4,20.6 14.4,19.3 16.5,19.3 C18.5,19.3 19.4,22 20.1,24 C20.8,26 21.5,27.4 22.4,27.4"/><path d="M9.7,23.4 H15.3"/><path d="M23.1,19.4 C20.6,21.4 18,24.4 15.7,27.3"/></g><path d="M38.45,19 L43.3,23.7 H42.2 V28 H39.8 V25 H37.1 V28 H34.75 V23.7 H33.6 Z" fill="#fff" opacity="0.6"/><line x1="69.1" y1="19.4" x2="65.6" y2="27.7" stroke="#fff" stroke-opacity="0.7" stroke-width="1.3"/><g fill="none" stroke="#fff" stroke-width="1.2"><circle cx="583.8" cy="22.6" r="2.9"/><path d="M585.9,24.7 L589,27.6"/></g><rect x="602.1" y="19" width="9.2" height="8.6" rx="0.8" fill="#fff"/><path d="M606.80,19.90 L607.24,19.93 L607.68,20.02 L607.68,21.16 L607.96,21.30 L608.21,21.47 L609.20,20.90 L609.50,21.23 L609.74,21.60 L609.94,22.00 L610.08,22.42 L609.09,23.00 L609.11,23.30 L609.09,23.60 L610.08,24.18 L609.94,24.60 L609.74,25.00 L609.50,25.37 L609.20,25.70 L608.21,25.13 L607.96,25.30 L607.68,25.44 L607.68,26.58 L607.24,26.67 L606.80,26.70 L606.36,26.67 L605.92,26.58 L605.92,25.44 L605.64,25.30 L605.39,25.13 L604.40,25.70 L604.10,25.37 L603.86,25.00 L603.66,24.60 L603.52,24.18 L604.51,23.60 L604.49,23.30 L604.51,23.00 L603.52,22.42 L603.66,22.00 L603.86,21.60 L604.10,21.23 L604.40,20.90 L605.39,21.47 L605.64,21.30 L605.92,21.16 L605.92,20.02 L606.36,19.93Z" fill="#0f968a" stroke="#0f968a" stroke-width="0.3" stroke-linejoin="round"/><circle cx="606.80" cy="23.30" r="0.9" fill="#fff"/><rect x="628.1" y="19.70" width="1.9" height="1.8" rx="0.3" fill="#fff"/><rect x="628.1" y="22.60" width="1.9" height="1.8" rx="0.3" fill="#fff"/><rect x="628.1" y="25.50" width="1.9" height="1.8" rx="0.3" fill="#fff"/><path d="M604.5,2.7 V9.8 H597.6 Z" fill="#fff" opacity="0.35"/><path d="M604.5,4.6 V9.8 H599.4 Z" fill="#fff"/><text x="596.4" y="5.4" font-family="Liberation Sans" font-weight="bold" font-size="3" fill="#fff">3G</text><rect x="609.1" y="3.1" width="5.1" height="6.7" rx="0.5" fill="#fff" opacity="0.4"/><rect x="609.1" y="6.2" width="5.1" height="3.6" fill="#fff"/><rect x="610.6" y="2.3" width="2.1" height="1" fill="#fff" opacity="0.4"/><path d="M612.2,3.8 L610.2,6.6 H611.6 L611,8.8 L613,6 H611.6 Z" fill="#fff"/><path d="M252.5,388 L259.5,383.8 V392.3 Z" fill="none" stroke="#fff" stroke-width="1.1" stroke-linejoin="round"/><circle cx="320.1" cy="388.1" r="3.9" fill="none" stroke="#fff" stroke-width="1.2"/><rect x="380.2" y="384.4" width="7.4" height="7.4" rx="0.6" fill="none" stroke="#fff" stroke-width="1.2"/></svg>
</body></html>
